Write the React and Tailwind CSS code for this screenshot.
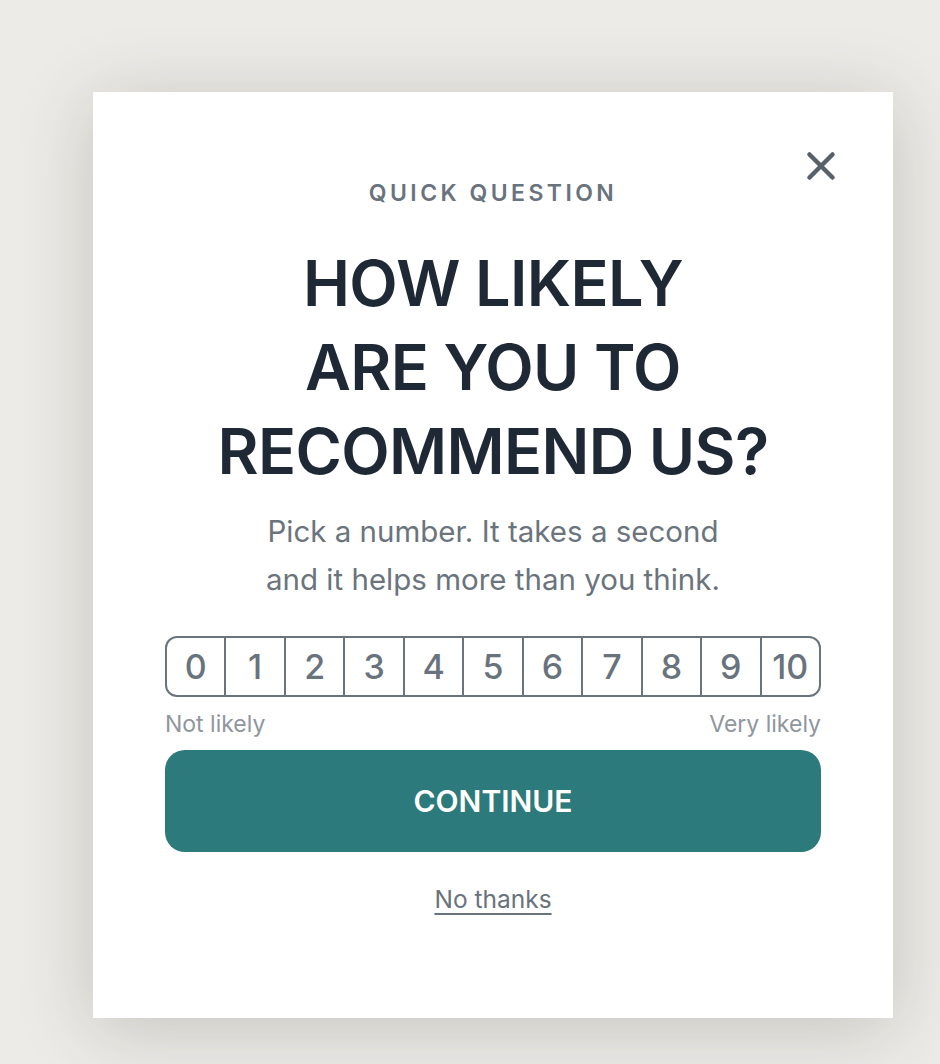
import { useState } from 'react';

const SCORES = [0, 1, 2, 3, 4, 5, 6, 7, 8, 9, 10];

export default function App() {
    const [score, setScore] = useState(null);

    return (
        <div className="min-h-[1064px] w-full bg-[#ecebe7] pl-[93px] pt-[92px] font-['Inter',sans-serif]">
            <div className="relative w-[800px] h-[926px] bg-white shadow-[0_10px_70px_rgba(60,55,45,0.22)] px-[72px] pt-[86px] flex flex-col items-center">
                <button className="absolute top-[58px] right-[56px] w-[32px] h-[32px] flex items-center justify-center text-[#58606a]">
                    <svg width="30" height="30" viewBox="0 0 30 30" fill="none">
                        <path d="M3.5 3.5 L26.5 26.5 M26.5 3.5 L3.5 26.5" stroke="currentColor" strokeWidth="4.5" strokeLinecap="round" />
                    </svg>
                </button>

                <p className="text-[23px] leading-[30px] font-semibold tracking-[0.15em] text-[#69737d]">
                    QUICK QUESTION
                </p>

                <h2 className="mt-[33px] text-center text-[63px] leading-[84px] font-semibold text-[#1f2935] tracking-[-0.01em]">
                    HOW LIKELY<br />ARE YOU TO<br />RECOMMEND US?
                </h2>

                <p className="mt-[14px] text-center text-[29.5px] leading-[48px] text-[#6b747d]">
                    Pick a number. It takes a second<br />and it helps more than you think.
                </p>

                <div className="mt-[33px] w-full h-[61px] flex border-2 border-[#6b747d] rounded-[12px] overflow-hidden">
                    {SCORES.map((n) => (
                        <button
                            key={n}
                            onClick={() => setScore(n)}
                            className={`flex-1 flex items-center justify-center text-[34px] font-medium border-l-2 border-[#6b747d] first:border-l-0 ${score === n ? 'bg-[#2c7a7b] text-white' : 'text-[#69737d]'}`}
                        >
                            {n}
                        </button>
                    ))}
                </div>

                <div className="mt-[15px] w-full flex justify-between text-[23px] leading-[24px] text-[#8f969d]">
                    <span>Not likely</span>
                    <span>Very likely</span>
                </div>

                <button className="mt-[14px] w-full h-[102px] rounded-[20px] bg-[#2c7a7b] text-white text-[30px] font-semibold">
                    CONTINUE
                </button>

                <button className="mt-[32px] text-[24.5px] leading-[30px] text-[#69737d] underline underline-offset-[5px]">
                    No thanks
                </button>
            </div>
        </div>
    );
}
